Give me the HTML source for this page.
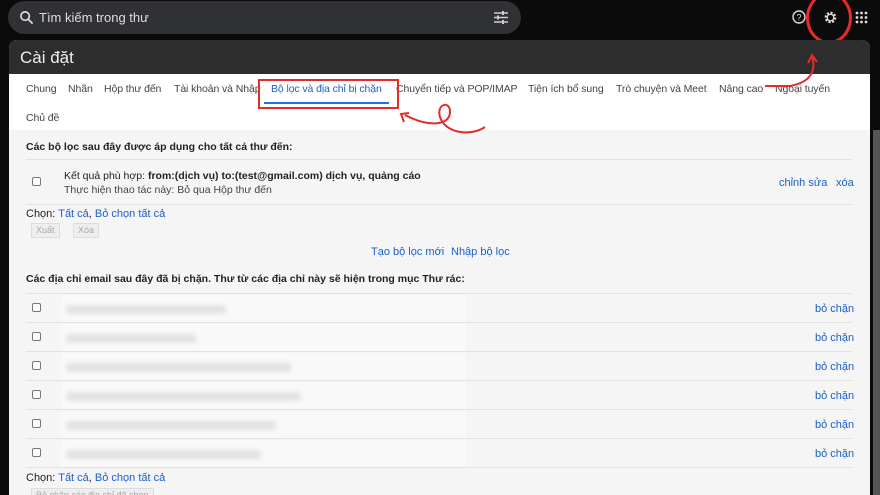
<!DOCTYPE html>
<html><head><meta charset="utf-8"><style>
*{margin:0;padding:0;box-sizing:border-box}
body{width:880px;height:495px;background:#0b0b0b;font-family:"Liberation Sans","Noto Sans CJK SC",sans-serif;position:relative;overflow:hidden;font-size:11px;color:#222}
.abs{position:absolute}
.search{left:8px;top:1px;width:513px;height:33px;border-radius:17px;background:#303134;color:#ddd;font-size:13px}
.panel{left:9px;top:40px;width:861px;height:455px;background:#f5f5f5;border-radius:8px 8px 0 0;overflow:hidden}
.hdr{left:0;top:0;width:861px;height:34px;background:#2d2d2d;color:#eee;font-size:17px;padding:8px 11px}
.tabs{left:0;top:34px;width:861px;height:56px;background:#fff}
.tab{position:absolute;top:9px;font-size:10.5px;color:#444;letter-spacing:-0.1px}
a,.lk{color:#1a5fc8}
.line{position:absolute;left:17px;width:826px;height:1px;background:#e2e2e2}
.cb{position:absolute;width:9px;height:9px;border:1px solid #777;border-radius:2px;background:#fff}
.blur{position:absolute;height:9px;background:#e2e2e2;filter:blur(2px);border-radius:3px}
.rowbg{position:absolute;left:52px;width:405px;height:27px;background:#f9f9f9}
.btn{position:absolute;height:15px;border:1px solid #ddd;background:#eee;color:#aaa;font-size:9px;padding:1px 4px}
.red{border:2px solid #e52b2b}
</style></head><body>
<div class="abs search"><svg class="abs" style="left:11px;top:9px" width="15" height="15" viewBox="0 0 16 16"><circle cx="6.5" cy="6.5" r="4.5" fill="none" stroke="#ddd" stroke-width="1.8"/><path d="M10 10l4.5 4.5" stroke="#ddd" stroke-width="1.8"/></svg><span class="abs" style="left:31px;top:9px">Tìm kiếm trong thư</span>
<svg class="abs" style="left:486px;top:10px" width="14" height="13" viewBox="0 0 14 13" stroke="#ccc" stroke-width="1.5"><path d="M0 2h14M0 6.5h14M0 11h14"/><path d="M9 0v4M4 4.5v4M9 9v4" stroke-width="2"/></svg></div>
<svg class="abs" style="left:792px;top:10px" width="14" height="14" viewBox="0 0 14 14"><circle cx="7" cy="7" r="6" fill="none" stroke="#ddd" stroke-width="1.4"/><text x="7" y="10.5" font-size="9" text-anchor="middle" fill="#ddd" font-family="Liberation Sans">?</text></svg>
<svg class="abs" style="left:823px;top:10px" width="15" height="15" viewBox="0 0 16 16"><circle cx="8" cy="8" r="5" fill="none" stroke="#ddd" stroke-width="2.5" stroke-dasharray="2.2 1.7"/><circle cx="8" cy="8" r="3.5" fill="none" stroke="#ddd" stroke-width="1.4"/></svg>
<div class="abs" style="left:806px;top:-8px;width:46px;height:52px;border:3px solid #e52b2b;border-radius:50%"></div>
<svg class="abs" style="left:855px;top:11px" width="13" height="13" viewBox="0 0 13 13" fill="#ddd"><circle cx="2" cy="2" r="1.4"/><circle cx="6.5" cy="2" r="1.4"/><circle cx="11" cy="2" r="1.4"/><circle cx="2" cy="6.5" r="1.4"/><circle cx="6.5" cy="6.5" r="1.4"/><circle cx="11" cy="6.5" r="1.4"/><circle cx="2" cy="11" r="1.4"/><circle cx="6.5" cy="11" r="1.4"/><circle cx="11" cy="11" r="1.4"/></svg>
<div class="abs" style="left:873px;top:130px;width:7px;height:365px;background:#555"></div>
<div class="abs panel">
<div class="abs hdr">Cài đặt</div>
<div class="abs tabs">
<span class="tab" style="left:17px">Chung</span><span class="tab" style="left:59px">Nhãn</span><span class="tab" style="left:95px">Hộp thư đến</span><span class="tab" style="left:165px">Tài khoản và Nhập</span><span class="tab lk" style="left:262px;color:#1a5fc8">Bộ lọc và địa chỉ bị chặn</span><span class="tab" style="left:387px">Chuyển tiếp và POP/IMAP</span><span class="tab" style="left:519px">Tiện ích bổ sung</span><span class="tab" style="left:607px">Trò chuyện và Meet</span><span class="tab" style="left:710px">Nâng cao</span><span class="tab" style="left:766px">Ngoại tuyến</span><span class="tab" style="left:17px;top:38px">Chủ đề</span>
<div class="abs" style="left:255px;top:28px;width:125px;height:2px;background:#1a73e8"></div>
<div class="abs red" style="left:249px;top:5px;width:141px;height:30px"></div>
</div>
<div class="abs" style="left:17px;top:101px;font-weight:bold;font-size:10.5px">Các bộ lọc sau đây được áp dụng cho tất cả thư đến:</div>
<div class="line" style="top:119px"></div>
<div class="cb" style="left:23px;top:137px"></div>
<div class="abs" style="left:55px;top:130px;font-size:10.5px">Kết quả phù hợp: <b>from:(dịch vụ) to:(test@gmail.com) dịch vụ, quảng cáo</b></div>
<div class="abs" style="left:55px;top:144px;font-size:10.5px;color:#444">Thực hiện thao tác này: Bỏ qua Hộp thư đến</div>
<div class="abs lk" style="left:770px;top:137px">chỉnh sửa</div><div class="abs lk" style="left:827px;top:137px">xóa</div>
<div class="line" style="top:164px"></div>
<div class="abs" style="left:17px;top:168px">Chọn: <span class="lk">Tất cả</span>, <span class="lk">Bỏ chọn tất cả</span></div>
<div class="btn" style="left:22px;top:183px">Xuất</div><div class="btn" style="left:64px;top:183px">Xóa</div>
<div class="abs lk" style="left:362px;top:206px">Tạo bộ lọc mới</div><div class="abs lk" style="left:442px;top:206px">Nhập bộ lọc</div>
<div class="abs" style="left:17px;top:233px;font-weight:bold;font-size:10.5px">Các địa chỉ email sau đây đã bị chặn. Thư từ các địa chỉ này sẽ hiện trong mục Thư rác:</div>
<div class="line" style="top:253px"></div>
<div class="rowbg" style="top:255px"></div><div class="rowbg" style="top:284px"></div><div class="rowbg" style="top:313px"></div><div class="rowbg" style="top:342px"></div><div class="rowbg" style="top:371px"></div><div class="rowbg" style="top:400px"></div>
<div class="cb" style="left:23px;top:263px"></div><div class="blur" style="left:57px;top:265px;width:160px"></div><div class="abs lk" style="left:806px;top:263px">bỏ chặn</div><div class="line" style="top:282px"></div>
<div class="cb" style="left:23px;top:292px"></div><div class="blur" style="left:57px;top:294px;width:130px"></div><div class="abs lk" style="left:806px;top:292px">bỏ chặn</div><div class="line" style="top:311px"></div>
<div class="cb" style="left:23px;top:321px"></div><div class="blur" style="left:57px;top:323px;width:225px"></div><div class="abs lk" style="left:806px;top:321px">bỏ chặn</div><div class="line" style="top:340px"></div>
<div class="cb" style="left:23px;top:350px"></div><div class="blur" style="left:57px;top:352px;width:235px"></div><div class="abs lk" style="left:806px;top:350px">bỏ chặn</div><div class="line" style="top:369px"></div>
<div class="cb" style="left:23px;top:379px"></div><div class="blur" style="left:57px;top:381px;width:210px"></div><div class="abs lk" style="left:806px;top:379px">bỏ chặn</div><div class="line" style="top:398px"></div>
<div class="cb" style="left:23px;top:408px"></div><div class="blur" style="left:57px;top:410px;width:195px"></div><div class="abs lk" style="left:806px;top:408px">bỏ chặn</div><div class="line" style="top:427px"></div>
<div class="abs" style="left:17px;top:432px">Chọn: <span class="lk">Tất cả</span>, <span class="lk">Bỏ chọn tất cả</span></div>
<div class="btn" style="left:22px;top:448px">Bỏ chặn các địa chỉ đã chọn</div>
</div>
<svg class="abs" style="left:0;top:0" width="880" height="495" fill="none" stroke="#e52b2b" stroke-width="2"><path d="M812 56 C816 70 812 82 790 86 L765 86"/><path d="M808 63l4-8 5 7"/><path d="M485 127 C470 137 445 133 440 117 C436 104 450 100 450 112 C450 125 430 128 405 115"/><path d="M404 122l-3-8 8-1"/></svg>
</body></html>
